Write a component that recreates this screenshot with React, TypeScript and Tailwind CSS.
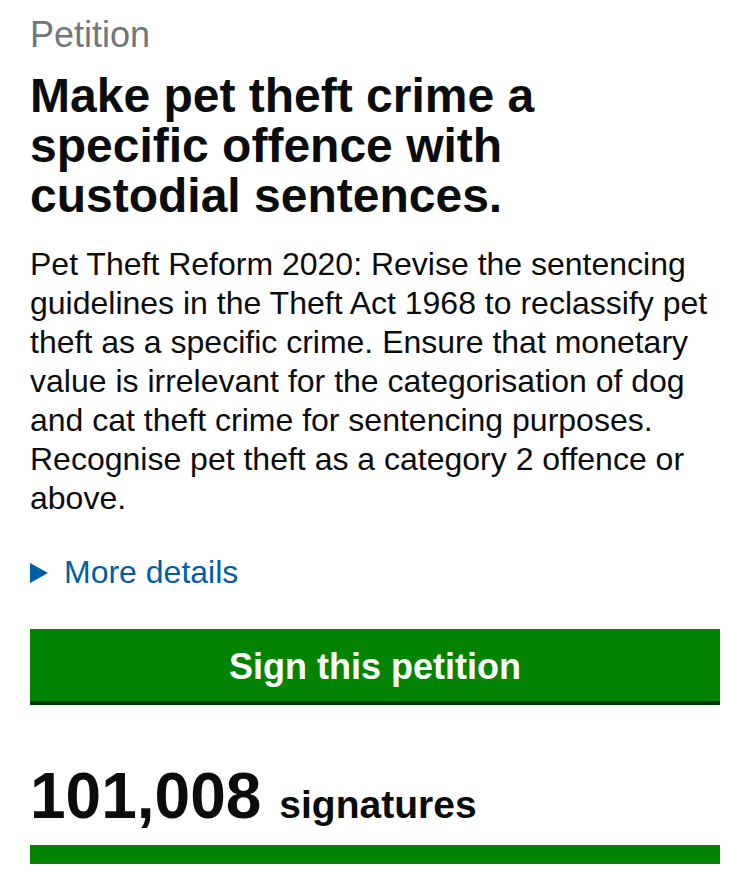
import React from "react";

const font = { fontFamily: '"Liberation Sans", Arial, Helvetica, sans-serif' };

export default function App() {
  return (
    <div className="min-h-[874px] w-[750px] bg-white px-[30px] pt-[15px] text-[#0b0c0c]" style={font}>
      <p className="text-[36px] leading-[40px] text-[#6f777b]">Petition</p>

      <h1 className="mt-[16px] text-[48px] font-bold leading-[50px]">
        Make pet theft crime a specific offence with custodial sentences.
      </h1>

      <p className="mt-[24px] text-[32px] leading-[39px]">
        Pet Theft Reform 2020: Revise the sentencing guidelines in the Theft Act 1968 to reclassify pet theft as a
        specific crime. Ensure that monetary value is irrelevant for the categorisation of dog and cat theft crime for
        sentencing purposes. Recognise pet theft as a category 2 offence or above.
      </p>

      <div className="mt-[35px] flex items-center text-[32px] leading-[39px] text-[#005ea5]">
        <svg width="18" height="20" viewBox="0 0 18 20" className="mr-[16px] shrink-0">
          <polygon points="0,0 18,10 0,20" fill="#005ea5" />
        </svg>
        <span>More details</span>
      </div>

      <button className="mt-[37px] flex h-[76px] w-full items-center justify-center border-b-[4px] border-[#003a00] bg-[#028402] pt-[3px] text-[36px] font-bold text-white">
        Sign this petition
      </button>

      <div className="mt-[59px] flex items-baseline">
        <span className="text-[64px] font-bold leading-[64px]">101,008</span>
        <span className="ml-[18px] text-[39px] font-bold leading-[40px]">signatures</span>
      </div>

      <div className="mt-[17px] h-[19px] w-full bg-[#028402]" />
    </div>
  );
}
